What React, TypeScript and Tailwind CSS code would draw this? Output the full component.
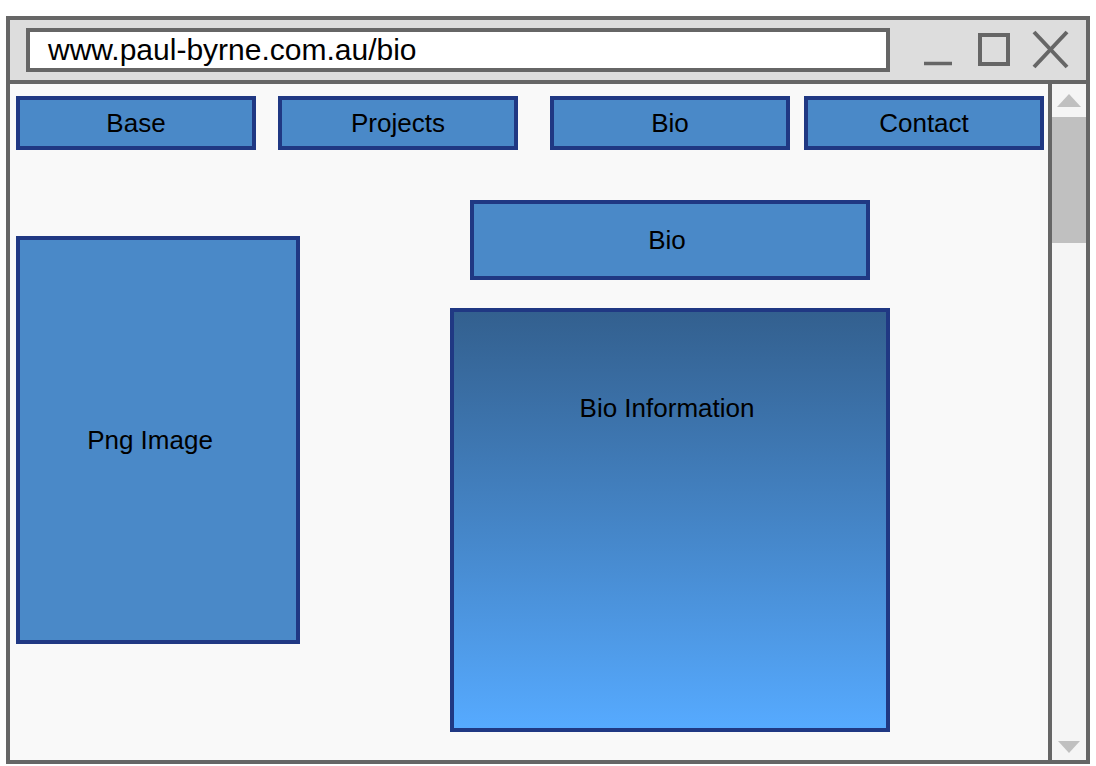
import React from 'react';

const font = { fontFamily: '"Liberation Sans", Arial, sans-serif' };

const NavButton: React.FC<{ label: string; className?: string }> = ({ label, className = '' }) => (
  <div
    className={`flex h-[54px] w-[240px] items-center justify-center border-4 border-[#203883] bg-[#4a89c8] text-[26px] text-black ${className}`}
  >
    {label}
  </div>
);

const WindowControls: React.FC = () => (
  <svg width="160" height="60" viewBox="0 0 160 60" className="ml-auto mr-[10px]">
    {/* minimize */}
    <line x1="8" y1="43.5" x2="36" y2="43.5" stroke="#666" strokeWidth="3.5" />
    {/* maximize */}
    <rect x="64" y="15" width="28" height="29" fill="none" stroke="#666" strokeWidth="4" />
    {/* close */}
    <line x1="118" y1="12" x2="151" y2="47" stroke="#666" strokeWidth="4" />
    <line x1="151" y1="12" x2="118" y2="47" stroke="#666" strokeWidth="4" />
  </svg>
);

const Scrollbar: React.FC = () => (
  <div className="flex w-[38px] flex-col border-l-4 border-[#666] bg-[#f5f5f5]">
    <div className="flex h-[33px] items-start justify-center pt-[10px]">
      <svg width="24" height="13" viewBox="0 0 24 13">
        <polygon points="12,0 24,13 0,13" fill="#c0c0c0" />
      </svg>
    </div>
    <div className="h-[126px] bg-[#c0c0c0]" />
    <div className="flex-1" />
    <div className="flex h-[19px] items-start justify-center pb-[7px]">
      <svg width="22" height="12" viewBox="0 0 22 12">
        <polygon points="0,0 22,0 11,12" fill="#c0c0c0" />
      </svg>
    </div>
  </div>
);

export default function App() {
  return (
    <div className="h-[766px] w-[1096px] bg-white pl-[6px] pt-[16px]" style={font}>
      <div className="flex h-[748px] w-[1084px] flex-col border-4 border-[#666]">
        {/* title bar */}
        <div className="flex h-[64px] items-start border-b-4 border-[#666] bg-[#dddddd]">
          <div className="ml-[16px] mt-[8px] flex h-[44px] w-[864px] items-center border-4 border-[#666] bg-white pl-[18px] text-[30px] leading-none text-black">
            www.paul-byrne.com.au/bio
          </div>
          <WindowControls />
        </div>

        {/* page body */}
        <div className="flex flex-1">
          <div className="flex flex-1 flex-col bg-[#f9f9f9] pl-[6px] pt-[12px]">
            <div className="flex">
              <NavButton label="Base" />
              <NavButton label="Projects" className="ml-[22px]" />
              <NavButton label="Bio" className="ml-[32px]" />
              <NavButton label="Contact" className="ml-[14px]" />
            </div>

            <div className="flex">
              <div className="mt-[86px] flex h-[408px] w-[284px] items-center justify-center border-4 border-[#203883] bg-[#4a89c8] pr-[16px] text-[26px] text-black">
                Png Image
              </div>

              <div className="ml-[150px] flex flex-col">
                <div className="ml-[20px] mt-[50px] flex h-[80px] w-[400px] items-center justify-center border-4 border-[#203883] bg-[#4a89c8] pr-[6px] text-[26px] text-black">
                  Bio
                </div>
                <div className="mt-[28px] flex h-[424px] w-[440px] justify-center border-4 border-[#203883] bg-gradient-to-b from-[#33608f] to-[#56aaff] pr-[6px] pt-[77px] text-[26px] text-black">
                  Bio Information
                </div>
              </div>
            </div>
          </div>
          <Scrollbar />
        </div>
      </div>
    </div>
  );
}
